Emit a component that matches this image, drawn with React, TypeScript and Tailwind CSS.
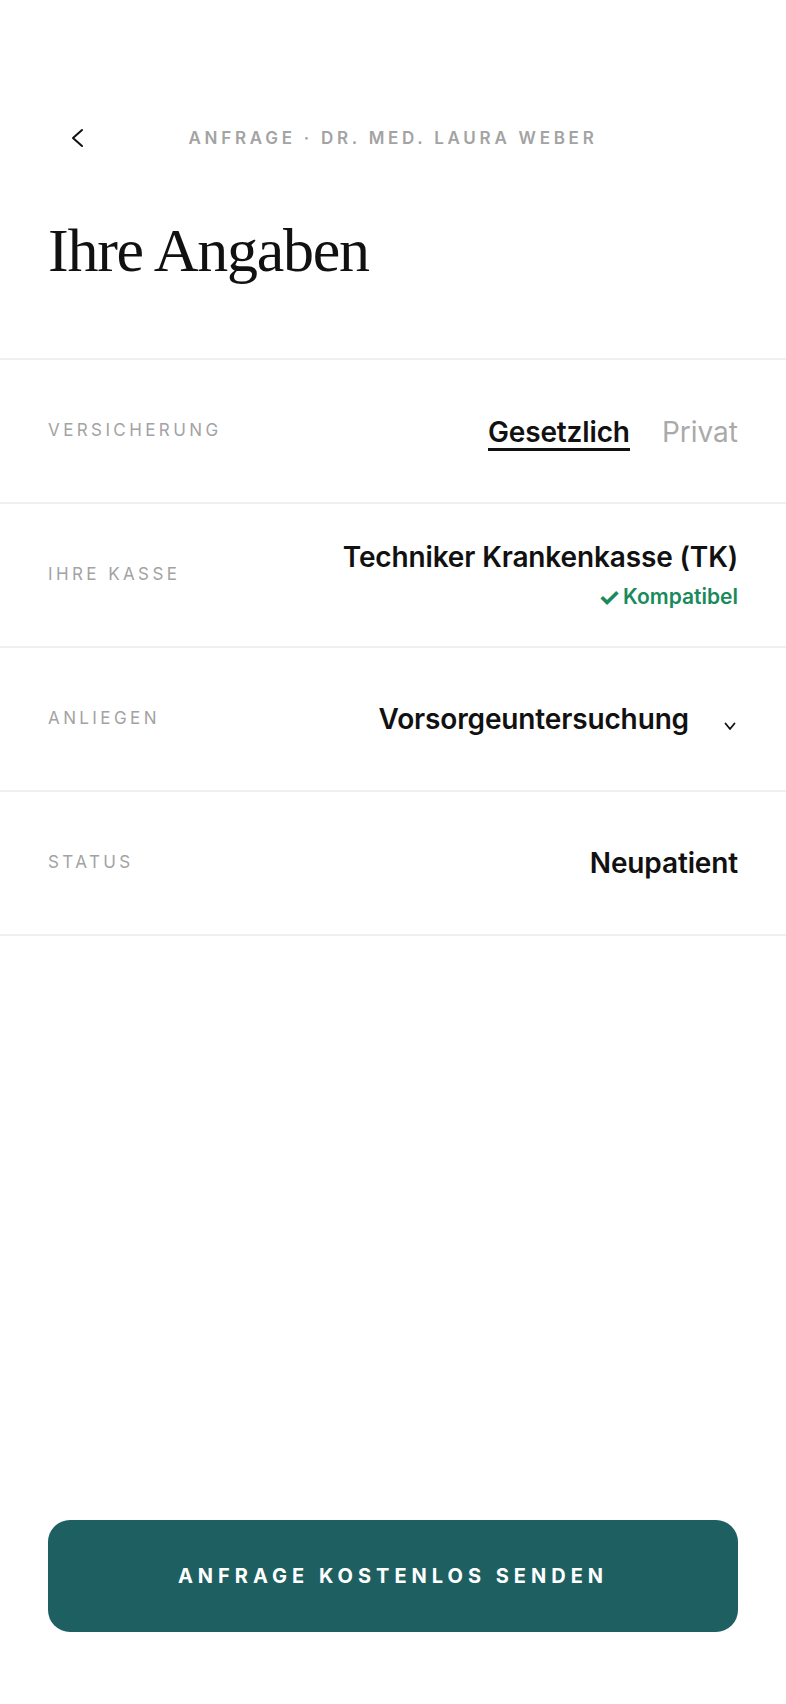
import React from "react"

const labelCls = "font-['Inter',sans-serif] text-[17px] tracking-[0.2em] text-[#a3a3a3] uppercase"
const valueCls = "font-['Inter',sans-serif] text-[28px] leading-8 font-semibold tracking-[-0.005em] text-[#111111]"

function Row({ label, children }: { label: string; children: React.ReactNode }) {
  return (
    <div className="flex h-[144px] items-center justify-between border-b-2 border-[#efefef] px-12">
      <span className={labelCls}>{label}</span>
      {children}
    </div>
  )
}

export default function App() {
  return (
    <div className="flex min-h-screen flex-col bg-white font-['Inter',sans-serif]">
      {/* Header */}
      <div className="mt-[114px] grid h-12 grid-cols-[1fr_auto_1fr] items-center px-[70px]">
        <button className="flex items-center justify-start text-[#111]">
          <svg width="14" height="20" viewBox="0 0 14 20" fill="none">
            <path d="M12 2L3 10L12 18" stroke="currentColor" strokeWidth="2" strokeLinecap="round" strokeLinejoin="round" />
          </svg>
        </button>
        <span className="pt-[1px] text-[17px] font-semibold uppercase tracking-[0.22em] text-[#a3a3a3]">
          Anfrage · Dr. med. Laura Weber
        </span>
        <span />
      </div>

      <h1 className="mt-[57px] px-12 font-['Liberation_Serif',serif] text-[62px] leading-none tracking-[-0.02em] text-[#111]">
        Ihre Angaben
      </h1>

      {/* Fields */}
      <div className="mt-[77px] border-t-2 border-[#efefef]">
        <Row label="Versicherung">
          <div className="flex items-center gap-[32px] pt-[1px]">
            <span className={`${valueCls} border-b-[3px] border-[#111] pt-1`}>Gesetzlich</span>
            <span className="text-[28px] leading-8 text-[#aaaaaa]">Privat</span>
          </div>
        </Row>
        <Row label="Ihre Kasse">
          <div className="flex flex-col items-end gap-[12px]">
            <span className={valueCls}>Techniker Krankenkasse (TK)</span>
            <span className="flex items-center gap-[3px] text-[21px] leading-6 font-semibold text-[#1a8a5c]">
              <span className="text-[25px] font-bold">✓</span>
              Kompatibel
            </span>
          </div>
        </Row>
        <Row label="Anliegen">
          <div className="flex items-center pr-[2px]">
            <span className={valueCls}>Vorsorgeuntersuchung</span>
            <svg className="ml-[35px] mt-[15px]" width="12" height="9" viewBox="0 0 12 9" fill="none">
              <path d="M1.5 1.5L6 7L10.5 1.5" stroke="#111" strokeWidth="1.8" strokeLinecap="round" strokeLinejoin="round" />
            </svg>
          </div>
        </Row>
        <Row label="Status">
          <span className={valueCls}>Neupatient</span>
        </Row>
      </div>

      <div className="flex-1" />

      <div className="px-12 pb-[72px]">
        <button className="flex h-[112px] w-full items-center justify-center rounded-[22px] bg-[#1e5f61] text-[20px] font-bold uppercase tracking-[0.25em] text-white">
          Anfrage kostenlos senden
        </button>
      </div>
    </div>
  )
}
